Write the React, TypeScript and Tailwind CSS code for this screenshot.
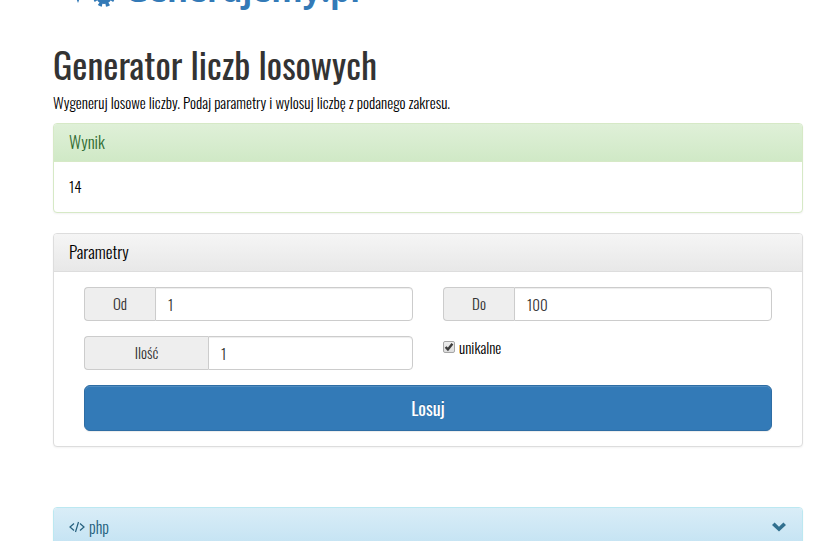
import React, { useState } from 'react';

interface PanelProps {
  variant: 'success' | 'default' | 'info';
  title: React.ReactNode;
  children?: React.ReactNode;
}

const panelStyles = {
  success: {
    box: 'border-[#d6e9c6]',
    heading: 'border-[#d6e9c6] from-[#dff0d8] to-[#d0e9c6] text-[#2f6b31]',
  },
  default: {
    box: 'border-[#dddddd]',
    heading: 'border-[#dddddd] from-[#f5f5f5] to-[#e8e8e8] text-black',
  },
  info: {
    box: 'border-[#bce8f1]',
    heading: 'border-[#bce8f1] from-[#d9edf7] to-[#c4e3f3] text-[#245f7d]',
  },
};

const Panel = ({ variant, title, children }: PanelProps) => (
  <section className={`rounded border bg-white shadow-[0_1px_2px_rgba(0,0,0,0.05)] ${panelStyles[variant].box}`}>
    <h2 className={`flex h-[38px] items-center rounded-t-[3px] border-b bg-linear-to-b px-[15px] pb-0.5 text-[17px] font-light ${panelStyles[variant].heading}`}>
      {title}
    </h2>
    {children}
  </section>
);

interface NumberFieldProps {
  id: string;
  label: string;
  labelWidth: string;
  value: string;
  onChange: (value: string) => void;
}

const NumberField = ({ id, label, labelWidth, value, onChange }: NumberFieldProps) => (
  <div className="flex h-[34px] text-[#333333]">
    <label
      htmlFor={id}
      className={`flex shrink-0 items-center justify-center rounded-l border border-r-0 border-[#cccccc] bg-[#eeeeee] pb-0.5 text-[15px] font-light ${labelWidth}`}
    >
      {label}
    </label>
    <input
      id={id}
      type="text"
      inputMode="numeric"
      value={value}
      onChange={(e) => onChange(e.target.value)}
      className="w-full min-w-0 rounded-r border border-[#cccccc] bg-white px-3 text-[15px] font-light shadow-[inset_0_1px_1px_rgba(0,0,0,0.075)] outline-none"
    />
  </div>
);

const Logo = () => (
  <a href="#" className="flex h-11 shrink-0 items-center text-[#337ab7]">
    <svg viewBox="0 0 48 40" className="mr-1 h-10 w-12" fill="none" stroke="currentColor" aria-hidden="true">
      <path d="M-2 8 L5 26 L12 8" strokeWidth="5" />
      <circle cx="31" cy="26" r="6" strokeWidth="4" />
      <circle cx="31" cy="26" r="9" strokeWidth="4" strokeDasharray="3.5 3.57" strokeDashoffset="-1.79" />
    </svg>
    <span className="font-['Open_Sans',sans-serif] text-[32px] font-bold">Generujemy.pl</span>
  </a>
);

export default function App() {
  const [from, setFrom] = useState('1');
  const [to, setTo] = useState('100');
  const [count, setCount] = useState('1');
  const [unique, setUnique] = useState(true);

  return (
    <div className="h-screen overflow-hidden bg-white pr-6 pl-[53px] font-[Oswald,'Liberation_Sans',sans-serif] text-[#333333]">
      {/* only the lower edge of the logo stays in view */}
      <header className="flex h-3 items-end overflow-hidden pl-5">
        <Logo />
      </header>

      <main>
        <h1 className="mt-8 text-4xl leading-10">Generator liczb losowych</h1>
        <p className="mt-2 mb-[11px] text-[15px] leading-5 font-light text-black">
          Wygeneruj losowe liczby. Podaj parametry i wylosuj liczbę z podanego zakresu.
        </p>

        <div className="flex flex-col gap-5">
          <Panel variant="success" title="Wynik">
            <output className="block px-[15px] pt-3.5 pb-4 text-[15px] leading-5 font-light text-black">14</output>
          </Panel>

          <Panel variant="default" title="Parametry">
            <form className="px-[30px] py-[15px]" onSubmit={(e) => e.preventDefault()}>
              <div className="grid grid-cols-2 gap-x-[30px] gap-y-[15px]">
                <NumberField id="from" label="Od" labelWidth="w-[71px]" value={from} onChange={setFrom} />
                <NumberField id="to" label="Do" labelWidth="w-[71px]" value={to} onChange={setTo} />
                <NumberField id="count" label="Ilość" labelWidth="w-[124px]" value={count} onChange={setCount} />
                <label className="flex h-[22px] items-center gap-1 text-[15px] font-light text-black">
                  <span className="relative flex size-3">
                    <input
                      type="checkbox"
                      checked={unique}
                      onChange={(e) => setUnique(e.target.checked)}
                      className="peer size-3 appearance-none rounded-xs border border-[#a6a6a6] bg-linear-to-b from-[#eeeeee] to-[#dddddd]"
                    />
                    <svg viewBox="0 0 12 12" className="pointer-events-none absolute inset-0 hidden size-3 peer-checked:block" aria-hidden="true">
                      <path d="M2.6 6 L4.9 8.4 L9.4 2.8" fill="none" stroke="#3d3d3d" strokeWidth="2.4" />
                    </svg>
                  </span>
                  unikalne
                </label>
              </div>
              <button
                type="submit"
                className="mt-[15px] h-[46px] w-full rounded-md border border-[#2e6da4] bg-[#337ab7] text-lg text-white shadow-[inset_0_1px_0_rgba(255,255,255,0.15),0_1px_1px_rgba(0,0,0,0.075)] text-shadow-[0_-1px_0_rgba(0,0,0,0.2)]"
              >
                Losuj
              </button>
            </form>
          </Panel>
        </div>

        <div className="mt-[60px]">
          <Panel
            variant="info"
            title={
              <a href="#php" className="flex w-full items-center gap-1 pt-0.5 text-base">
                <svg viewBox="0 0 16 12" className="h-3 w-4" fill="none" stroke="currentColor" strokeWidth="1.2" aria-hidden="true">
                  <path d="M5 2.5 L1 6 L5 9.5 M11 2.5 L15 6 L11 9.5 M9.5 1 L6.5 11" />
                </svg>
                php
                <svg viewBox="0 0 15 10" className="ml-auto h-[10px] w-[15px]" aria-hidden="true">
                  <path d="M0 3 L2.6 0.5 L7 4.8 L11.4 0.5 L14 3 L7 9.5 Z" fill="#31708f" />
                </svg>
              </a>
            }
          />
        </div>
      </main>
    </div>
  );
}
